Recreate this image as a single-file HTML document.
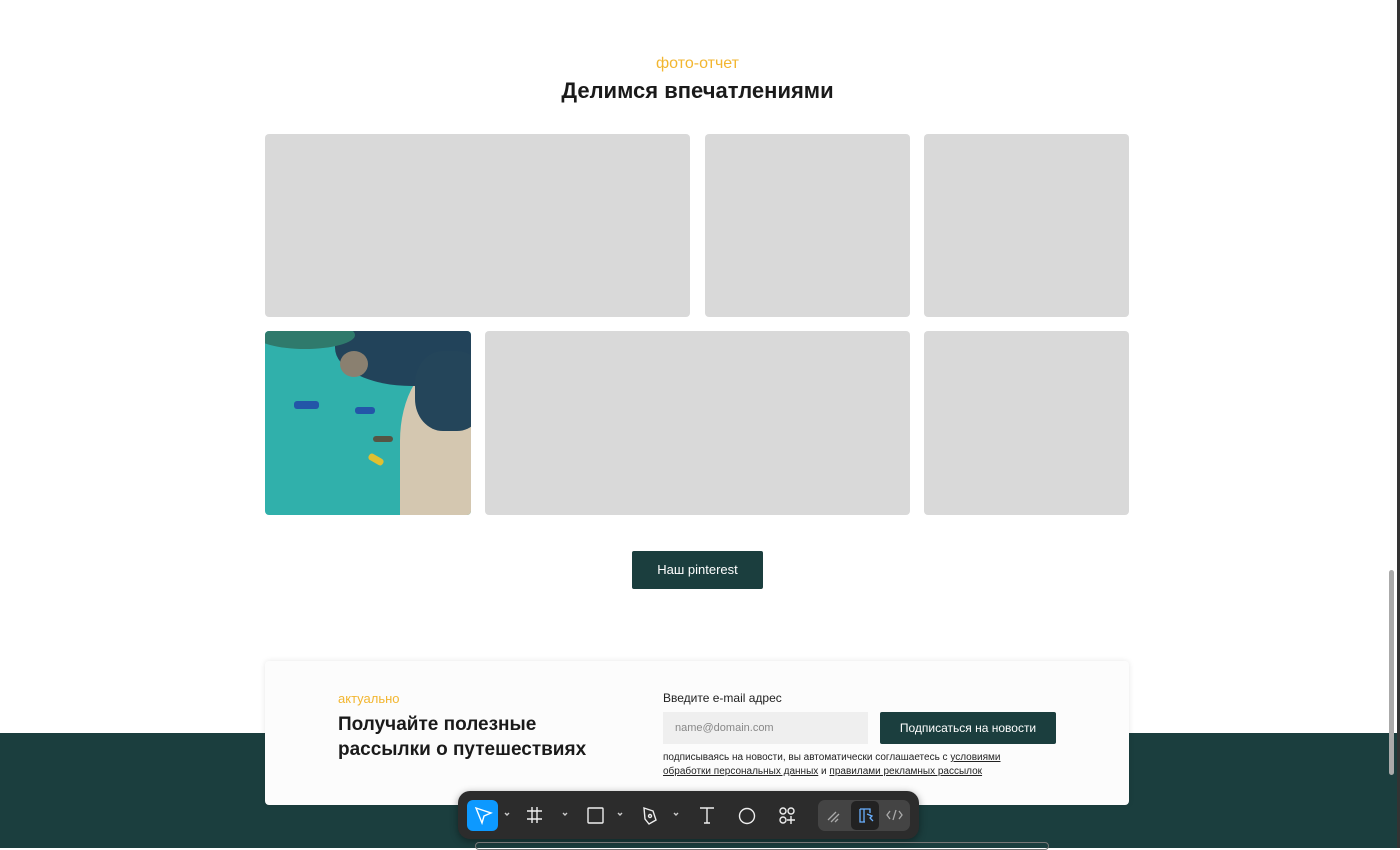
<!DOCTYPE html>
<html><head><meta charset="utf-8"><style>
*{margin:0;padding:0;box-sizing:border-box}
body{width:1400px;height:848px;overflow:hidden;background:#fff;font-family:"Liberation Sans","DejaVu Sans",sans-serif;position:relative}
.abs{position:absolute}
.ph{position:absolute;background:#d9d9d9;border-radius:4px}
</style></head><body>
<div class="abs" style="left:0;top:733px;width:1400px;height:115px;background:#1b3e3e"></div>
<div class="abs" style="left:1397px;top:0;width:3px;height:848px;background:#333"></div>
<div class="abs" style="left:1389px;top:570px;width:5px;height:205px;background:#aaa;border-radius:3px"></div>
<div class="abs" style="left:0;top:55px;width:1395px;text-align:center;color:#f2b630;font-size:16px">фото-отчет</div>
<div class="abs" style="left:0;top:78px;width:1395px;text-align:center;color:#1a1a1a;font-size:22px;font-weight:bold">Делимся впечатлениями</div>
<div class="ph" style="left:265px;top:134px;width:425px;height:183px"></div>
<div class="ph" style="left:705px;top:134px;width:205px;height:183px"></div>
<div class="ph" style="left:924px;top:134px;width:205px;height:183px"></div>
<div class="ph" style="left:265px;top:331px;width:206px;height:184px;overflow:hidden;background:#30b0ab">
<div class="abs" style="left:135px;top:30px;width:120px;height:200px;background:#d4c7b0;border-radius:40% 0 0 0"></div>
<div class="abs" style="left:70px;top:-30px;width:170px;height:85px;background:#22435a;border-radius:45%"></div>
<div class="abs" style="left:150px;top:20px;width:70px;height:80px;background:#24455a;border-radius:40%"></div>
<div class="abs" style="left:-10px;top:-10px;width:100px;height:28px;background:#2f7a6c;border-radius:50%"></div>
<div class="abs" style="left:75px;top:20px;width:28px;height:26px;background:#8a8070;border-radius:50%"></div>
<div class="abs" style="left:29px;top:70px;width:25px;height:8px;background:#2356a8;border-radius:3px"></div>
<div class="abs" style="left:90px;top:76px;width:20px;height:7px;background:#2356a8;border-radius:3px"></div>
<div class="abs" style="left:108px;top:105px;width:20px;height:6px;background:#554;border-radius:3px"></div>
<div class="abs" style="left:103px;top:125px;width:16px;height:7px;background:#e0c030;border-radius:3px;transform:rotate(30deg)"></div>
</div>
<div class="ph" style="left:485px;top:331px;width:425px;height:184px"></div>
<div class="ph" style="left:924px;top:331px;width:205px;height:184px"></div>
<div class="abs" style="left:632px;top:551px;width:131px;height:38px;background:#1b3e3e;border-radius:2px;color:#fff;font-size:13px;text-align:center;line-height:38px">Наш pinterest</div>
<div class="abs" style="left:265px;top:661px;width:864px;height:144px;background:#fcfcfc;border-radius:4px;box-shadow:0 0 6px rgba(0,0,0,.1)"></div>
<div class="abs" style="left:338px;top:691px;color:#f2b630;font-size:13px">актуально</div>
<div class="abs" style="left:338px;top:712px;color:#1a1a1a;font-size:19px;font-weight:bold;line-height:25px">Получайте полезные<br>рассылки о путешествиях</div>
<div class="abs" style="left:663px;top:691px;color:#222;font-size:12px">Введите e-mail адрес</div>
<div class="abs" style="left:663px;top:712px;width:205px;height:32px;background:#efefef;color:#888;font-size:11px;line-height:32px;padding-left:12px">name@domain.com</div>
<div class="abs" style="left:880px;top:712px;width:176px;height:32px;background:#1b3e3e;border-radius:2px;color:#fff;font-size:12px;text-align:center;line-height:32px">Подписаться на новости</div>
<div class="abs" style="left:663px;top:751px;color:#222;font-size:10px;line-height:14px">подписываясь на новости, вы автоматически соглашаетесь с <u>условиями</u><br><u>обработки персональных данных</u> и <u>правилами рекламных рассылок</u></div>
<div class="abs" style="left:458px;top:791px;width:461px;height:48px;background:#2c2c2c;border-radius:12px;box-shadow:0 2px 8px rgba(0,0,0,.4)"></div>
<div class="abs" style="left:467px;top:800px;width:31px;height:31px;background:#0d99ff;border-radius:6px"></div>
<svg class="abs" style="left:467px;top:791px" width="452" height="48" fill="none" stroke="#eee" stroke-width="1.4">
<path d="M9 17 L24 22 L17 25 L15 32 Z" stroke="#fff"/>
<path d="M38 22l2 2 2-2M96 22l2 2 2-2M151 22l2 2 2-2M207 22l2 2 2-2" stroke="#ccc"/>
<path d="M65 16v16M70 16v16M60 20h15M60 28h15"/>
<rect x="121" y="17" width="15" height="15" rx="1"/>
<path d="M177 17l9 3 3 9-7 4-4-5z"/><circle cx="183" cy="25" r="1.5"/>
<path d="M233 17h14M240 17v15M237 32h6"/>
<circle cx="280" cy="25" r="7.5"/>
<circle cx="316" cy="20" r="3"/><circle cx="324" cy="20" r="3"/><circle cx="316" cy="29" r="3"/><path d="M324 25v8M320 29h8"/>
</svg>
<div class="abs" style="left:818px;top:800px;width:92px;height:31px;background:#444;border-radius:7px"></div>
<div class="abs" style="left:851px;top:801px;width:28px;height:29px;background:#222;border-radius:5px"></div>
<svg class="abs" style="left:818px;top:800px" width="92" height="31" fill="none" stroke-width="1.3">
<path d="M10 20l8-8M13 22l8-8M17 22l3-3" stroke="#aaa"/>
<path d="M42 9h10v4M42 9v13h5M46 9v13M49 14l5 2-2 2 3 3" stroke="#6ab0ff"/>
<path d="M72 11l-3 4 3 4M81 11l3 4-3 4M78 10l-3 10" stroke="#aaa"/>
</svg>
<div class="abs" style="left:475px;top:842px;width:574px;height:8px;border:1px solid #777;border-radius:4px"></div>
</body></html>
